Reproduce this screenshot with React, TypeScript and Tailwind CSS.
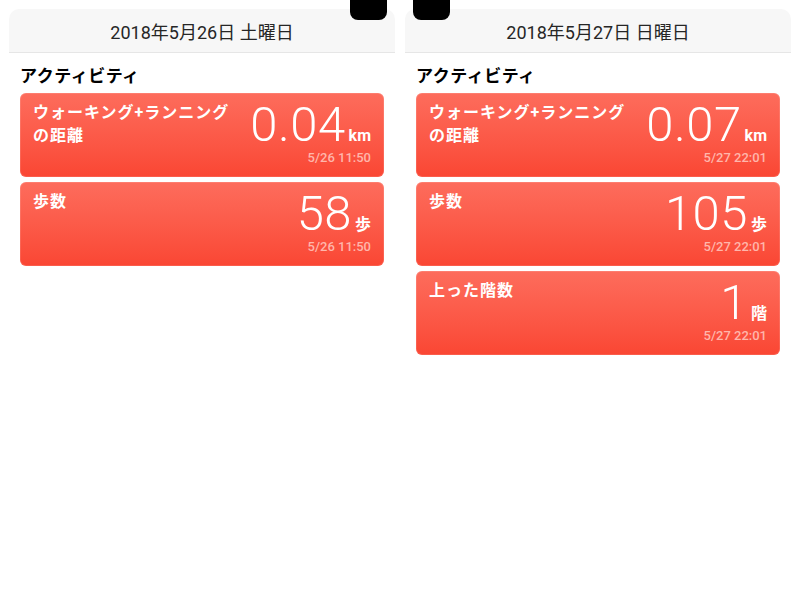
import React from 'react';

type Item = {
  title: string[];
  value: string;
  unit: string;
  time: string;
};

const days: { date: string; notch: 'left' | 'right'; items: Item[] }[] = [
  {
    date: '2018年5月26日 土曜日',
    notch: 'right',
    items: [
      { title: ['ウォーキング+ランニング', 'の距離'], value: '0.04', unit: 'km', time: '5/26 11:50' },
      { title: ['歩数'], value: '58', unit: '歩', time: '5/26 11:50' },
    ],
  },
  {
    date: '2018年5月27日 日曜日',
    notch: 'left',
    items: [
      { title: ['ウォーキング+ランニング', 'の距離'], value: '0.07', unit: 'km', time: '5/27 22:01' },
      { title: ['歩数'], value: '105', unit: '歩', time: '5/27 22:01' },
      { title: ['上った階数'], value: '1', unit: '階', time: '5/27 22:01' },
    ],
  },
];

const Card = ({ item }: { item: Item }) => (
  <div className="h-[84px] rounded-[6px] bg-gradient-to-b from-[#fd6c5c] to-[#fa4633] px-[13px] pt-[8px] flex justify-between text-white shadow-[inset_0_0_0_1px_rgba(255,255,255,0.12)]">
    <div className="text-[16px] font-bold leading-[23px] tracking-[1px]">
      {item.title.map((t) => (
        <div key={t}>{t}</div>
      ))}
    </div>
    <div className="flex flex-col items-end">
      <div className="flex items-baseline h-[48px]">
        <span className="font-['Roboto'] text-[49px] font-light leading-[48px] tracking-[0.5px]">{item.value}</span>
        <span className="ml-[3px] text-[16px] font-bold leading-none">{item.unit}</span>
      </div>
      <span className="mt-[2px] text-[13px] leading-[14px] font-medium text-[#ffb6ab]">{item.time}</span>
    </div>
  </div>
);

const App = () => {
  return (
    <div className="w-[800px] h-[600px] bg-white font-['Roboto','Noto_Sans_CJK_JP',sans-serif] flex gap-[10px] px-[9px]">
      {days.map((day) => (
        <div key={day.date} className="relative flex-1 pt-[9px]">
          <div className="h-[44px] rounded-t-[10px] bg-[#f7f7f7] border-b border-[#e6e6e6] flex items-center justify-center pt-[4px] text-[18px] text-[#262626]">
            {day.date}
          </div>
          <div
            className={
              day.notch === 'right'
                ? 'absolute top-0 left-[341px] w-[37px] h-[20px] rounded-b-[8px] bg-black'
                : 'absolute top-0 left-[8px] w-[37px] h-[20px] rounded-b-[8px] bg-black'
            }
          />
          <div className="px-[11px]">
            <div className="mt-[12px] text-[17px] font-bold leading-[22px] text-black tracking-[0.5px]">
              アクティビティ
            </div>
            <div className="mt-[6px] flex flex-col gap-[5px]">
              {day.items.map((item) => (
                <Card key={item.title.join('')} item={item} />
              ))}
            </div>
          </div>
        </div>
      ))}
    </div>
  );
};

export default App;
